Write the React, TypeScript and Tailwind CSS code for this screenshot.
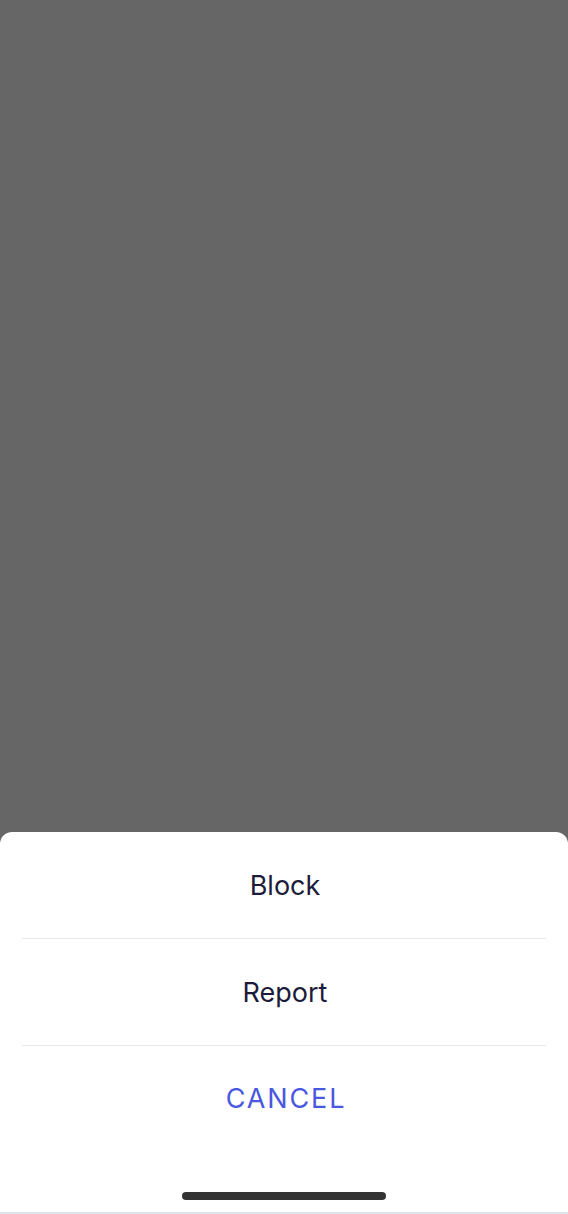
export default function App() {
  const font = { fontFamily: "Inter, 'Noto Sans', sans-serif" }

  return (
    <div className="flex h-[1214px] w-full flex-col bg-[#666666]" style={font}>
      {/* dimmed backdrop */}
      <div className="flex-1" />

      {/* action sheet */}
      <div className="flex flex-col rounded-t-[12px] bg-white">
        <div className="px-[22px]">
          <button className="flex h-[107px] w-full items-center justify-center border-b border-[#e8e8ec] pt-[2px] pl-[2px] text-[27px] text-[#1c1c3a]">
            Block
          </button>
          <button className="flex h-[107px] w-full items-center justify-center border-b border-[#e8e8ec] pt-[2px] pl-[2px] text-[27px] text-[#1c1c3a]">
            Report
          </button>
          <button className="flex h-[105px] w-full items-center justify-center pt-[2px] pl-[4px] text-[27px] tracking-[0.07em] text-[#4a57e0]">
            CANCEL
          </button>
        </div>
        <div className="flex h-[61px] items-start justify-center pt-[41px]">
          <div className="h-[8px] w-[204px] rounded-full bg-[#333333]" />
        </div>
        <div className="h-[2px] bg-[#dde4ee]" />
      </div>
    </div>
  )
}
